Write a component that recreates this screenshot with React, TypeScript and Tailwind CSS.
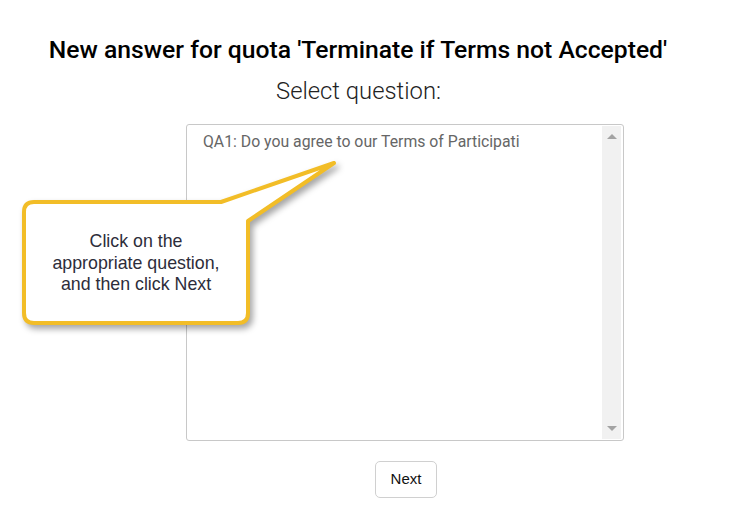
import React from "react";

/* Quota wizard step — pick the question, with a tutorial callout on top. */

const QUESTIONS = ["QA1: Do you agree to our Terms of Participati"];

function Callout() {
  return (
    <div className="pointer-events-none absolute left-0 top-0 h-[340px] w-[350px]">
      <svg width="350" height="340" className="absolute left-0 top-0 drop-shadow-[3px_4px_3px_rgba(0,0,0,0.35)]">
        <path
          d="M34 202 L221 202 L334 163 L248 221 L248 313 Q248 323 238 323 L34 323 Q24 323 24 313 L24 212 Q24 202 34 202 Z"
          fill="#ffffff"
          stroke="#f2bd27"
          strokeWidth="4"
          strokeLinejoin="round"
        />
      </svg>
      <p className="absolute left-[26px] top-[231px] w-[220px] text-center text-[17.8px] leading-[21.5px] text-[#2d2d3a] [font-family:'Liberation_Sans',Arial,sans-serif]">
        Click on the
        <br />
        appropriate question,
        <br />
        and then click Next
      </p>
    </div>
  );
}

export default function App() {
  return (
    <main className="relative min-h-[505px] w-[734px] bg-white [font-family:Roboto,'Noto_Sans',sans-serif]">
      <div className="flex flex-col pt-[35px]">
        <h1 className="w-[716px] text-center text-[24.7px] font-medium leading-[30px] text-black">
          New answer for quota 'Terminate if Terms not Accepted'
        </h1>
        <p className="mt-[11px] w-[717px] text-center text-[23.8px] font-light leading-[30px] text-[#222]">
          Select question:
        </p>

        {/* Liste */}
        <div className="ml-[186px] mt-[18px] flex h-[317px] w-[438px] rounded-[3px] border border-[#c8c8c8]">
          <ul className="flex-1 pl-[16px] pt-[7px]">
            {QUESTIONS.map((q) => (
              <li key={q} className="text-[15.8px] leading-[20px] text-[#666]">{q}</li>
            ))}
          </ul>
          <div className="my-[1px] mr-[2px] flex w-[19px] flex-col items-center justify-between bg-[#f1f1f1] py-[8px]">
            <span className="h-0 w-0 border-x-[5px] border-b-[5px] border-x-transparent border-b-[#a3a3a3]" />
            <span className="h-0 w-0 border-x-[5px] border-t-[5px] border-x-transparent border-t-[#a3a3a3]" />
          </div>
        </div>

        <div className="ml-[375px] mt-[20px]">
          <button
            type="button"
            className="h-[37px] w-[62px] rounded-[5px] border border-[#d0d0d0] bg-white text-[15px] text-[#111] [font-family:'Liberation_Sans',Arial,sans-serif]"
          >
            Next
          </button>
        </div>
      </div>

      <Callout />
    </main>
  );
}
